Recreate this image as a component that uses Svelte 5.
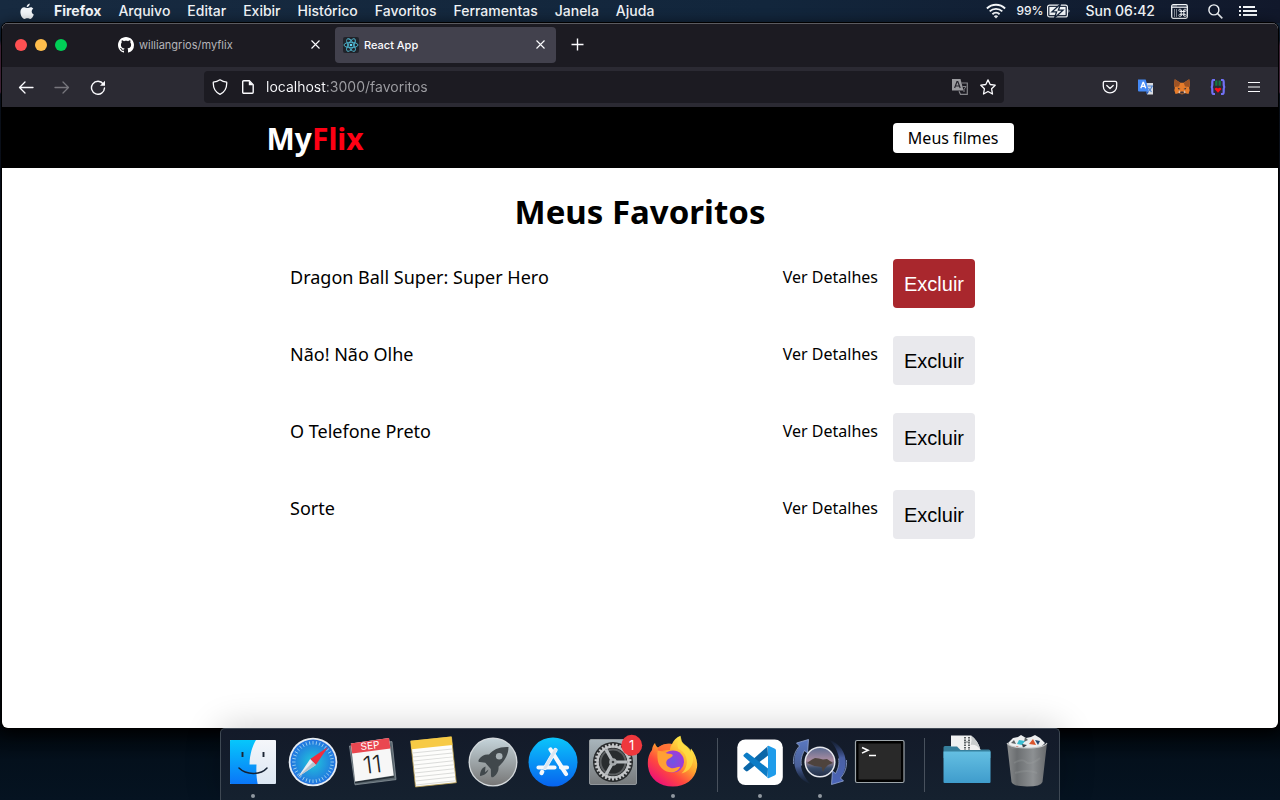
<script>
  const menus = ['Arquivo', 'Editar', 'Exibir', 'Histórico', 'Favoritos', 'Ferramentas', 'Janela', 'Ajuda'];
  const movies = ['Dragon Ball Super: Super Hero', 'Não! Não Olhe', 'O Telefone Preto', 'Sorte'];
  const ticks = Array.from({ length: 36 }, (_, i) => i * 10);
  const teeth = Array.from({ length: 30 }, (_, i) => i * 12);
</script>

<div class="desktop">
  <header class="menubar">
    <nav class="menus" aria-label="Menu">
      <button class="apple" aria-label="Apple">
        <svg width="14" height="17" viewBox="0 0 14 17" fill="currentColor">
          <path d="M9.8 0.6c.1 1.900-1.300 3.600-3.100 3.600C6.500 2.400 8.100.8 9.800.6z" />
          <path d="M13.300 5.800c-2.300 1.400-2 4.700.5 5.700-.6 1.900-2.100 4.400-3.500 4.400-1.200 0-1.500-.7-2.900-.7s-1.800.7-2.900.7C2.500 15.900.4 12.300.4 9c0-3 1.900-4.700 3.800-4.700 1.300 0 2.200.8 3.200.8.9 0 1.900-.9 3.400-.9 1 0 2 .6 2.500 1.600z" />
        </svg>
      </button>
      <button class="app-name">Firefox</button>
      {#each menus as m}
        <button>{m}</button>
      {/each}
    </nav>
    <div class="status">
      <svg width="20" height="16" viewBox="0 0 20 16" fill="none" stroke="currentColor" stroke-width="1.900">
        <path d="M.9 5.500a13 13 0 0 1 18.200 0M3.700 8.400a9 9 0 0 1 12.600 0M6.400 11.200a5.200 5.200 0 0 1 7.200 0" />
        <path d="M10 15.600l-2.200-2.300a3.200 3.200 0 0 1 4.400 0z" fill="currentColor" stroke="none" />
      </svg>
      <span class="percent">99%</span>
      <svg class="battery" width="24" height="14" viewBox="0 0 24 14">
        <rect x=".6" y="1.100" width="19.800" height="11.800" rx="2" fill="none" stroke="currentColor" stroke-width="1.200" />
        <rect x="2.400" y="2.900" width="16.200" height="8.200" fill="currentColor" />
        <path d="M21.600 4.800q1.600 2.200 0 4.400z" fill="currentColor" />
        <path d="M13.500 0L5 7.800h4.600L7.500 14 16 6.200h-4.600z" fill="currentColor" stroke="#13233a" stroke-width="1.300" />
      </svg>
      <span class="clock">Sun 06:42</span>
      <svg class="keys" width="17" height="15" viewBox="0 0 17 15" fill="none" stroke="currentColor">
        <rect x=".7" y=".7" width="15.600" height="13.600" rx="1.500" stroke-width="1.300" />
        <path d="M1 3.200h15" stroke-width="1.200" />
        <path d="M2.500 1.900h4" stroke-dasharray="1 1" />
        <path d="M3 6h3M3 8h3M3 10h3M3 12h3" stroke-dasharray="1 1" />
        <path d="M9 7.500h5M9 10.200h5M10.200 6v6M12.800 6v6" stroke-width="1" />
        <rect x="7.800" y="5.200" width="2.400" height="2.200" rx="1" stroke-width=".8" /><rect x="12.800" y="5.200" width="2.400" height="2.200" rx="1" stroke-width=".8" />
        <rect x="7.800" y="10.300" width="2.400" height="2.200" rx="1" stroke-width=".8" /><rect x="12.800" y="10.300" width="2.400" height="2.200" rx="1" stroke-width=".8" />
      </svg>
      <svg class="search" width="15" height="15" viewBox="0 0 15 15" fill="none" stroke="currentColor" stroke-width="1.400">
        <circle cx="5.900" cy="5.900" r="5" /><path d="M9.500 9.500l4.800 4.800" stroke-width="1.700" />
      </svg>
      <svg class="list" width="18" height="12" viewBox="0 0 18 12" fill="currentColor">
        <path d="M0 1h2v2H0zM0 5h2v2H0zM0 9h2v2H0zM4 1h12v2H4zM4 5h14v2H4zM4 9h14v2H4z" />
      </svg>
    </div>
  </header>

  <section class="window" aria-label="Firefox">
    <div class="tabbar">
      <div class="lights">
        <button class="red" aria-label="Fechar"></button>
        <button class="yellow" aria-label="Minimizar"></button>
        <button class="green" aria-label="Maximizar"></button>
      </div>
      <div class="tab">
        <svg width="16" height="16" viewBox="0 0 16 16" fill="#fff">
          <path d="M8 0C3.580 0 0 3.580 0 8c0 3.540 2.290 6.530 5.470 7.590.4.070.55-.17.55-.38 0-.19-.01-.82-.01-1.490-2.010.37-2.530-.49-2.690-.94-.09-.23-.48-.94-.82-1.130-.28-.15-.68-.52-.01-.53.63-.01 1.080.58 1.230.82.72 1.210 1.870.87 2.330.66.070-.52.28-.87.51-1.070-1.780-.2-3.640-.89-3.640-3.950 0-.87.31-1.590.82-2.150-.08-.2-.36-1.020.08-2.120 0 0 .67-.21 2.200.82.64-.18 1.320-.27 2-.27s1.360.09 2 .27c1.530-1.040 2.200-.82 2.200-.82.44 1.100.16 1.920.08 2.120.51.56.82 1.270.82 2.150 0 3.070-1.870 3.750-3.650 3.950.29.25.54.73.54 1.480 0 1.070-.01 1.930-.01 2.200 0 .21.15.46.55.38A8 8 0 0 0 16 8c0-4.420-3.580-8-8-8z" />
        </svg>
        <span>williangrios/myflix</span>
        <button class="close" aria-label="Fechar aba">
          <svg width="9" height="9" viewBox="0 0 9 9" stroke="currentColor" stroke-width="1.100"><path d="M.5.5l8 8M8.500.5l-8 8" /></svg>
        </button>
      </div>
      <div class="tab active">
        <svg width="16" height="16" viewBox="0 0 16 16" fill="none" stroke="#4fb9d3" stroke-width=".9">
          <rect width="16" height="16" rx="2" fill="#20232a" stroke="none" />
          <ellipse cx="8" cy="8" rx="7" ry="2.700" />
          <ellipse cx="8" cy="8" rx="7" ry="2.700" transform="rotate(60 8 8)" />
          <ellipse cx="8" cy="8" rx="7" ry="2.700" transform="rotate(120 8 8)" />
          <circle cx="8" cy="8" r="1.300" fill="#61dafb" stroke="none" />
        </svg>
        <span>React App</span>
        <button class="close" aria-label="Fechar aba">
          <svg width="9" height="9" viewBox="0 0 9 9" stroke="currentColor" stroke-width="1.100"><path d="M.5.5l8 8M8.500.5l-8 8" /></svg>
        </button>
      </div>
      <button class="plus" aria-label="Nova aba">
        <svg width="13" height="13" viewBox="0 0 13 13" stroke="currentColor" stroke-width="1.400"><path d="M6.500.5v12M.5 6.500h12" /></svg>
      </button>
    </div>

    <div class="toolbar">
      <div class="tools">
        <button aria-label="Voltar">
          <svg width="16" height="16" viewBox="0 0 16 16" fill="none" stroke="currentColor" stroke-width="1.300" stroke-linecap="round" stroke-linejoin="round"><path d="M15 8.500H1.500M7 3L1.500 8.500 7 14" /></svg>
        </button>
        <button class="dim" aria-label="Avançar">
          <svg width="16" height="16" viewBox="0 0 16 16" fill="none" stroke="currentColor" stroke-width="1.300" stroke-linecap="round" stroke-linejoin="round"><path d="M1 8.500h13.500M9 3l5.500 5.500L9 14" /></svg>
        </button>
        <button aria-label="Recarregar">
          <svg width="16" height="16" viewBox="0 0 16 16" fill="none" stroke="currentColor" stroke-width="1.400" stroke-linecap="round"><path d="M13.300 5a6.500 6.500 0 1 0 1.200 4" /><path d="M15 1.800v5h-5z" fill="currentColor" stroke="none" /></svg>
        </button>
      </div>
      <div class="urlbar">
        <svg width="16" height="16" viewBox="0 0 16 16" fill="none" stroke="#fbfbfe" stroke-width="1.300" stroke-linejoin="round"><path d="M8 .8c2 1.400 4.300 2.200 6.700 2.400.3 5.400-1.400 9.800-6.700 12.100C2.700 13 1 8.600 1.300 3.200 3.700 3 6 2.200 8 .8z" /></svg>
        <svg class="page" width="12" height="14" viewBox="0 0 12 14"><path d="M1.700.8h5.600l3.900 3.900v7.600a1 1 0 0 1-1 1H1.700a1 1 0 0 1-1-1V1.800a1 1 0 0 1 1-1z" fill="none" stroke="#fbfbfe" stroke-width="1.400" /><path d="M6.800.8v4.500h4.400z" fill="#fbfbfe" /></svg>
        <input class="address" type="text" aria-label="Endereço" value="localhost:3000/favoritos" />
        <svg width="16" height="16" viewBox="0 0 16 16"><path d="M0 0h8.500l3 11.500H0z" fill="#9b9b9f" /><path d="M2.600 9L5 2.500h.8L8.200 9M3.400 7h4" stroke="#25242c" stroke-width="1.200" fill="none" /><path d="M9.500 4h5.800v11.300H8.500l-1.500-3" fill="none" stroke="#85858a" stroke-width="1.200" /><path d="M10.500 7.500h3.500l-2 3M12 10.500v2.500" fill="none" stroke="#85858a" /></svg>
        <svg width="16" height="16" viewBox="0 0 16 16" fill="none" stroke="#fbfbfe" stroke-width="1.300" stroke-linejoin="round"><path d="M8 .9l2.200 4.600 5 .7-3.600 3.600.9 5.200L8 12.500 3.500 15l.9-5.200L.8 6.200l5-.7z" /></svg>
      </div>
      <div class="tools">
        <button aria-label="Pocket">
          <svg width="16" height="16" viewBox="0 0 16 16" fill="none" stroke="currentColor" stroke-width="1.300" stroke-linecap="round" stroke-linejoin="round"><path d="M2.800 2.300h10.400a1.500 1.500 0 0 1 1.500 1.500v3.400a6.700 6.700 0 0 1-13.400 0V3.800a1.500 1.500 0 0 1 1.500-1.500z" /><path d="M4.800 6.500L8 9.500l3.200-3" /></svg>
        </button>
        <button aria-label="Traduzir">
          <svg width="16" height="16" viewBox="0 0 16 16"><path d="M7 4h8v11.500H9z" fill="#d9dbe0" /><path d="M9.800 7h4.600l-3 5M10.500 9l3 4" stroke="#4d82cf" stroke-width="1.100" fill="none" /><path d="M0 .5h7.700l3.300 12H1a1 1 0 0 1-1-1z" fill="#4489f5" /><path d="M2.800 9.200L5 3.500h.5L7.700 9.200M3.600 7.300h3.500" stroke="#fff" stroke-width="1.300" fill="none" /><path d="M7.800 12.500H11l-2 3z" fill="#2459b8" /></svg>
        </button>
        <button aria-label="MetaMask">
          <svg width="16" height="16" viewBox="0 0 16 16"><path d="M.8.3l5.500 3.500h3.400L15.200.3 16 5l-.8 4 .5 2.300-1.200 3.700-4-1-1.400 1.200H6.900L5.500 14l-4 1L.3 11.300.8 9 0 5z" fill="#e77c2b" /><path d="M.8.3l5.500 3.500L5 7.500.8 8 0 5zM15.200.3L9.700 3.800 11 7.500l4.200.5.8-3z" fill="#9d5325" /><path d="M3.500 8.500L6.500 10l-2 .5zM12.500 8.500L9.500 10l2 .5z" fill="#31323c" /><path d="M6.500 12.500h3l.5 2H6z" fill="#38313a" /><path d="M5.300 11.200l1 1.300-.5 2-1.500-1zM10.700 11.200l-1 1.300.5 2 1.500-1z" fill="#d8bfb0" /></svg>
        </button>
        <button aria-label="JSON">
          <svg width="16" height="16" viewBox="0 0 16 16"><path d="M5 1H3.500q-1.200 0-1.200 2v2.500Q2.300 8 .8 8q1.500 0 1.500 2.500V13q0 2 1.200 2H5M11 1h1.500q1.200 0 1.200 2v2.500q0 2.500 1.500 2.500-1.500 0-1.500 2.500V13q0 2-1.200 2H11" fill="none" stroke="#7071f5" stroke-width="2.200" /><path d="M6.300 1.500v5.300M9.700 1.500v5.300" stroke="#167840" stroke-width="2.300" /><path d="M4.500 10q1.500-2 3.500-.5 2-1.500 3.500.5L8 13.800z" fill="#ff1018" /></svg>
        </button>
        <button aria-label="Abrir menu">
          <svg width="12" height="12" viewBox="0 0 12 12" stroke="currentColor" stroke-width="1.200"><path d="M0 1.500h12M0 6h12M0 10.500h12" /></svg>
        </button>
      </div>
    </div>

    <div class="site">
      <header class="site-header">
        <div class="site-inner">
          <a class="logo" href="#inicio">My<span>Flix</span></a>
          <a class="mine" href="#favoritos">Meus filmes</a>
        </div>
      </header>
      <main>
        <h1>Meus Favoritos</h1>
        <ul>
          {#each movies as movie, i}
            <li>
              <span class="title">{movie}</span>
              <a href="#detalhes">Ver Detalhes</a>
              <button class:hot={i === 0}>Excluir</button>
            </li>
          {/each}
        </ul>
      </main>
    </div>
  </section>

  <footer class="dock-row">
    <nav class="dock" aria-label="Dock">
      <button aria-label="Finder">
        <svg viewBox="0 0 60 72">
          <defs>
            <linearGradient id="fd" x2="0" y2="1"><stop stop-color="#06c7fb" /><stop offset="1" stop-color="#0a76f8" /></linearGradient>
            <linearGradient id="fl" x2="0" y2="1"><stop stop-color="#f5f6fa" /><stop offset="1" stop-color="#dce7f3" /></linearGradient>
          </defs>
          <rect x="7" y="12" width="46" height="44" rx="1" fill="url(#fl)" />
          <path d="M8 12h25c-3.500 6-6.200 14-6.500 24.500h7c-.4 7 0 13.500 1.200 19.500H8a1 1 0 0 1-1-1V13a1 1 0 0 1 1-1z" fill="url(#fd)" />
          <path d="M19.500 24v5M40.500 24v5" stroke="#1b2533" stroke-width="1.900" />
          <path d="M16 40c7 7 21.500 7.500 28 0" stroke="#152133" stroke-width="1.500" fill="none" stroke-linecap="round" />
          <circle cx="30" cy="68" r="2" fill="#8f979f" />
        </svg>
      </button>
      <button aria-label="Safari">
        <svg viewBox="0 0 60 72">
          <defs><radialGradient id="sf"><stop stop-color="#21c8dc" /><stop offset="1" stop-color="#2272df" /></radialGradient></defs>
          <circle cx="30" cy="34" r="24.300" fill="#e8edf2" /><circle cx="30" cy="34" r="22.500" fill="url(#sf)" />
          {#each ticks as a}<path d="M30 13v3.500" stroke="#a9d8f2" stroke-width=".8" transform="rotate({a} 30 34)" />{/each}
          <path d="M45 19L32.800 37 27.200 31z" fill="#f02d3d" /><path d="M15 49l12.200-18 5.600 6z" fill="#e9edf2" /><path d="M15 49l15-15 2.800 3z" fill="#b9c3cd" />
        </svg>
      </button>
      <button aria-label="Calendário">
        <svg viewBox="0 0 60 72">
          <path d="M6.500 18L12 56.800l41-5.200-4-38z" fill="#59656d" stroke="#98a2a8" stroke-width=".7" />
          <path d="M12 54.500l39-5.800" stroke="#242d35" stroke-width="1.500" />
          <path d="M7.800 15.500L46 10l4.700 37.500-38.500 6z" fill="#f7f7f7" /><path d="M7.800 15.500L46 10l1.400 10.600-38.200 5z" fill="#e94750" />
          <g transform="rotate(-7 29 34)" text-anchor="middle">
            <text x="29" y="21" fill="#fff" font-size="10">SEP</text>
            <text x="29" y="45" fill="#252525" font-size="24" font-weight="300">11</text>
          </g>
        </svg>
      </button>
      <button aria-label="Notas">
        <svg viewBox="0 0 60 72">
          <g transform="rotate(-6 30 34)">
            <rect x="10" y="11" width="41" height="46" fill="#fdfdfb" stroke="#b69a4c" stroke-width=".8" /><rect x="10" y="10.500" width="41" height="8.500" fill="#f7ca45" />
            <path d="M10.500 23h40M10.500 27h40M10.500 31h40M10.500 35h40M10.500 39h40M10.500 43h40M10.500 47h40M10.500 51h40M10.500 55h40" stroke="#dbdcda" />
          </g>
        </svg>
      </button>
      <button aria-label="Launchpad">
        <svg viewBox="0 0 60 72">
          <defs><linearGradient id="lp" x2="0" y2="1"><stop stop-color="#c4d3d9" /><stop offset="1" stop-color="#777" /></linearGradient></defs>
          <circle cx="30" cy="34" r="24.500" fill="#d4d9dc" /><circle cx="30" cy="34" r="23.200" fill="url(#lp)" />
          <path d="M45.500 19c-9-.5-15.500 2.500-19.500 7.500-4-.5-7.500 1-10 4.800-.9 1.600-.8 2.500.8 2.700l5.500.8 5.500 6.200.2 6.500c.1 2 1.200 2.300 2.800 1.200 3.300-2.500 5.200-6 4.700-10C40 34.500 45.500 28 45.500 19z" fill="#41484c" />
          <circle cx="36.200" cy="28.300" r="3.300" fill="#a8b1b5" /><path d="M22.500 38.500c-4 1.500-5.500 5.500-5.500 9.500 4-.5 7.500-3 8.500-6.500l-3.500 2.800z" fill="#41484c" />
        </svg>
      </button>
      <button aria-label="App Store">
        <svg viewBox="0 0 60 72">
          <defs><linearGradient id="as" x2="0" y2="1"><stop stop-color="#0bc5fb" /><stop offset="1" stop-color="#0763ef" /></linearGradient></defs>
          <circle cx="30" cy="34" r="24.500" fill="url(#as)" />
          <g stroke="#f5f8fc" stroke-width="4.200" stroke-linecap="round"><path d="M32.500 22L22 40M18.600 45l.6-1.200M27.500 21.500L43 46" /><path d="M15.500 39.500h16M38 39.500h6" /></g>
          <path d="M32.500 22L22 40" stroke="#dbe5f0" stroke-width="3" stroke-linecap="round" />
        </svg>
      </button>
      <button aria-label="Preferências, 1 aviso">
        <svg viewBox="0 0 60 72">
          <defs><linearGradient id="st" x2="0" y2="1"><stop stop-color="#a8b5bc" /><stop offset="1" stop-color="#777a7c" /></linearGradient></defs>
          <rect x="6.500" y="11.500" width="47" height="45" rx="1.500" fill="url(#st)" stroke="#a5aaad" stroke-width=".8" />
          <circle cx="30" cy="34" r="20" fill="#292c2e" />
          <circle cx="30" cy="34" r="15.500" fill="none" stroke="#b9bcbe" stroke-width="2.500" />
          {#each teeth as a}<path d="M30 15.500v4" stroke="#c6c8ca" stroke-width="1.900" transform="rotate({a} 30 34)" />{/each}
          <circle cx="30" cy="34" r="12.500" fill="none" stroke="#5b5e60" stroke-width="2" />
          <path d="M30 34h14M30 34l-7-12.500M30 34l-7 12.500" stroke="#b6babd" stroke-width="3.200" /><circle cx="30" cy="34" r="3.800" fill="#a6aaac" /><circle cx="30" cy="34" r="1.300" fill="#3b3e40" />
          <circle cx="48.700" cy="17.300" r="10.500" fill="#ef383d" /><text x="48.700" y="22" text-anchor="middle" fill="#fff" font-size="13">1</text>
        </svg>
      </button>
      <button aria-label="Firefox">
        <svg viewBox="0 0 60 72">
          <defs>
            <linearGradient id="fx" x1=".8" y1=".1" x2=".2" y2=".9"><stop stop-color="#fff04b" /><stop offset=".4" stop-color="#ffa52d" /><stop offset=".7" stop-color="#ff493e" /><stop offset="1" stop-color="#ee1671" /></linearGradient>
            <radialGradient id="fp"><stop stop-color="#6e55e4" /><stop offset="1" stop-color="#a13bd7" /></radialGradient>
          </defs>
          <path d="M9 22c.2-3 1.500-5.500 3-7 .5 2 1.500 3.500 3 4.500 4-3.500 9-4.500 14-3.500 1.500-3.500 4-6.500 8.500-8.200-.3 5 2 7.500 5.500 10.200 2 1.500 3.500 3.500 4.500 6l.5-3.500c4.500 5.500 7 13 6 19-2 12.500-12 19-24 19C16.500 58.500 6.500 51 5 38.500c-.7-7 .5-12 4-16.500z" fill="url(#fx)" />
          <path d="M15 19.500c4-3.500 9-4.500 14-3.500-1.500 2-2 4-2 6-5 0-9 1-12.500 3z" fill="#ff5a3a" opacity=".7" />
          <circle cx="30" cy="33.500" r="11" fill="url(#fp)" />
          <path d="M14.500 22.500c4 .5 7 1.500 9.500 3 3 .3 5.700.7 5.800 1.800-.5 2.200-4.500 3.200-6 5.200-1.500 3 0 6.500 4 7.500 4 1 6-1.500 9.500-1.200-2 4.200-6 5.700-9 5.500-7-.3-12.500-5-13.500-12-.5-3.500-.5-6.500-.3-9.800z" fill="#ffa034" />
          <path d="M37.500 8c-3 5-4 9.500-2 13 4 1.500 8 5.500 8.300 12 .2 6-2.800 10-5.300 12.500 8-2 13.500-9.500 11-19-1.500-7.500-8-9-10.500-13z" fill="#ffdf43" opacity=".75" />
          <circle cx="30" cy="68" r="2" fill="#8f979f" />
        </svg>
      </button>
      <span class="divider"></span>
      <button aria-label="Visual Studio Code">
        <svg viewBox="0 0 60 72">
          <rect x="7.300" y="11.500" width="45.500" height="45.500" rx="8" fill="#fff" />
          <path d="M37.500 18.500L13.800 39.500q-.8 1 0 1.800l2 1.800q1 .8 2 0L38 27.500z" fill="#0b66a8" />
          <path d="M37.500 49.500L13.800 28.500q-.8-1 0-1.800l2-1.800q1-.8 2 0L38 40.500z" fill="#0c7cc6" />
          <path d="M37 18.500q1-1 2-.5l6 2.800q1 .5 1 1.700v23q0 1.200-1 1.700l-6 2.800q-1 .5-2-.5 1 0 1-1.500V20q0-1.500-1-1.500z" fill="#1f9cea" />
          <circle cx="30" cy="68" r="2" fill="#8f979f" />
        </svg>
      </button>
      <button aria-label="Sincronizar">
        <svg viewBox="0 0 60 72">
          <defs><linearGradient id="sk" x2="0" y2="1"><stop stop-color="#596b91" /><stop offset=".45" stop-color="#ab8da1" /><stop offset=".7" stop-color="#394c69" /><stop offset="1" stop-color="#222c45" /></linearGradient>
            <linearGradient id="ar" x2="0" y2="1"><stop stop-color="#5a78c0" /><stop offset=".6" stop-color="#4a6099" /><stop offset="1" stop-color="#263a67" stop-opacity=".1" /></linearGradient>
            <linearGradient id="br" x2="0" y2="1"><stop stop-color="#263a67" stop-opacity=".1" /><stop offset=".4" stop-color="#4a60a4" /><stop offset="1" stop-color="#4a64b8" /></linearGradient></defs>
          <path d="M6.500 15L18.500 11.500 17.500 25l-3-2.500c-6 9-5 22 6 33.500C5 51 -1 32 9.500 18z" fill="url(#ar)" /><path d="M3.500 36C3 29 5 23 9.500 18l-3-3 12-3.500-1 13.500-3-2.500c-3 5-4 10-3 15" fill="none" stroke="#93a6d3" stroke-width=".8" />
          <path d="M53.500 53L41.500 56.500 42.500 43l3 2.500c6-9 5-22-6-33.500C55 17 61 36 50.500 50z" fill="url(#br)" /><path d="M56.500 32c.5 7-1.500 13-6 18l3 3-12 3.500 1-13.500 3 2.500c3-5 4-10 3-15" fill="none" stroke="#93a6d3" stroke-width=".8" />
          <circle cx="30" cy="34" r="14.800" fill="url(#sk)" stroke="#e6e8ee" stroke-width="1.500" />
          <path d="M17 35l5-3.500 3-1.500 4 .5 4 1 4-.5 6 4-5 2-3 3-2 4-1.500-5-7-1z" fill="#4e433d" />
          <circle cx="30" cy="68" r="2" fill="#8f979f" />
        </svg>
      </button>
      <button aria-label="Terminal">
        <svg viewBox="0 0 60 72">
          <rect x="5.500" y="12.500" width="48.500" height="42" rx="1.500" fill="#000" stroke="#9da5aa" stroke-width="1.200" /><rect x="8.500" y="15.500" width="42.500" height="36" fill="#292929" />
          <path d="M12 19.500l6 2.800-6 2.800M19 27.500h7" fill="none" stroke="#fff" stroke-width="1.600" />
        </svg>
      </button>
      <span class="divider"></span>
      <button aria-label="Downloads">
        <svg viewBox="0 0 60 72">
          <defs><linearGradient id="fo" x2="0" y2="1"><stop stop-color="#64bfe2" /><stop offset="1" stop-color="#3f9ccc" /></linearGradient></defs>
          <path d="M6.500 19.500q0-1.500 1.500-1.500h12l3.500 3.500h28q2 0 2 2V30h-47z" fill="#367f9c" />
          <path d="M14 7.500h20q7 5 9.500 14.500h-20L20 18.500h-6z" fill="#f0f1f1" /><path d="M28 9v13M32 9v13" stroke="#555b5e" stroke-width="1.900" stroke-dasharray="1.500 1" /><path d="M27 14h6" stroke="#6d7275" /><path d="M34 7.500q1.500 5-.3 9.500 6-1 9.800 5-2.500-10-9.500-14.500z" fill="#c8cccd" />
          <path d="M6.500 23.500h47V54a1 1 0 0 1-1 1h-45a1 1 0 0 1-1-1z" fill="url(#fo)" />
        </svg>
      </button>
      <button aria-label="Lixo">
        <svg viewBox="0 0 60 72">
          <defs><linearGradient id="tr"><stop stop-color="#8f9192" /><stop offset=".25" stop-color="#6f7274" /><stop offset=".65" stop-color="#929597" /><stop offset="1" stop-color="#6a6c6e" /></linearGradient></defs>
          <path d="M11 15l5-5 5-1 3-2 5 3 5-1 4-2 5 3 5 5-5 5-28 1z" fill="#eceeef" />
          <path d="M14 15l3-3 2 4zM28 9l3 3-4 2z" fill="#5d6366" /><path d="M22 12l6 1-3 4-5-1z" fill="#38bcd0" /><path d="M32 16l4-5 3 6z" fill="#d9542d" /><path d="M38 12l5 1-2 4z" fill="#22456e" /><path d="M25 16l5 1-4 3z" fill="#3a424b" /><path d="M19 18l3 1-2 1z" fill="#b63d29" />
          <path d="M10 15q3 5 20 5t20-5l-4.500 39q-1.500 4.500-15.500 4.500T14.500 54z" fill="url(#tr)" opacity=".96" />
          <path d="M10 15q3 5 20 5t20-5" fill="none" stroke="#c7c9ca" stroke-width="1.200" /><path d="M17 35q8-5 12-1t14-4M18 45q12-4 22 0" stroke="#a0a3a4" stroke-width="2" opacity=".25" fill="none" />
        </svg>
      </button>
    </nav>
  </footer>
</div>

<style>
  :global(body) { margin: 0; background: #050f1b; }
  * { box-sizing: border-box; }
  button { border: 0; padding: 0; background: none; color: inherit; font: inherit; }
  svg { display: block; flex: none; }
  a { color: inherit; text-decoration: none; }

  .desktop {
    min-height: 100vh;
    display: flex;
    flex-direction: column;
    font-family: Inter, sans-serif;
    background: linear-gradient(#14263c 0 40px, #6b3a5c 46px 92px, #111a2c 94px, #0a1220 500px, #01060b 728px, #04101c 760px, #051321);
  }
  .menubar {
    height: 23px;
    padding: 0 23px 1px 20px;
    display: flex;
    align-items: center;
    justify-content: space-between;
    background: linear-gradient(90deg, #172a40, #12263c 60%, #11182b);
    color: #f3f6f9;
    font-size: 14px;
    font-weight: 500;
  }
  .menus { display: flex; gap: 17px; align-items: center; line-height: 20px; }
  .apple { width: 17px; }
  .app-name { font-weight: 700; }
  .status { display: flex; align-items: center; line-height: 20px; }
  .percent { font-size: 12px; margin: 0 4px 0 10px; }
  .clock { margin: 0 16px 0 14px; }
  .search { margin: 0 16px 0 20px; }

  .window {
    flex: 1;
    margin: 0 2px;
    display: flex;
    flex-direction: column;
    border-radius: 6px;
    overflow: hidden;
    background: #fff;
    box-shadow: 0 0 0 1px #000, 0 4px 16px #000;
  }
  .tabbar {
    height: 44px;
    display: flex;
    align-items: center;
    padding: 0 0 2px 13px;
    background: #1c1b22;
    border-top: 1px solid #5b5b60;
    color: #fbfbfe;
  }
  .lights { display: flex; gap: 8px; margin-right: 43px; }
  .lights button { width: 12px; height: 12px; border-radius: 50%; }
  .red { background: #ff5052; }
  .yellow { background: #ffbd4c; }
  .green { background: #00ce56; }
  .tab {
    width: 221px;
    height: 36px;
    margin-right: 4px;
    padding: 0 11px 0 8px;
    display: flex;
    align-items: center;
    gap: 5px;
    border-radius: 4px;
    font-size: 11px;
    color: #b5b5b9;
  }
  .tab.active { background: #42414d; color: #fbfbfe; font-weight: 500; }
  .close { margin-left: auto; color: #fbfbfe; }
  .plus { margin-left: 11px; }
  .toolbar {
    height: 41px;
    padding: 0 6px;
    display: flex;
    align-items: center;
    justify-content: space-between;
    background: #2b2a33;
    border-bottom: 1px solid #000;
    color: #fbfbfe;
  }
  .tools { display: flex; }
  .tools button { width: 36px; height: 32px; display: grid; place-items: center; }
  .dim { color: #77767d; }
  .urlbar {
    flex: 0 1 800px;
    height: 32px;
    padding: 0 8px;
    display: flex;
    align-items: center;
    gap: 12px;
    background: #1c1b22;
    border-radius: 4px;
  }
  .page { margin: 0 0 0 2px; }
  .address {
    flex: 1;
    min-width: 0;
    padding: 0;
    border: 0;
    outline: 0;
    font: 14px/20px Inter, sans-serif;
    color: transparent;
    background: linear-gradient(90deg, #fbfbfe 60px, #9f9fa4 60px) text;
  }

  .site { flex: 1; font-family: "Noto Sans", sans-serif; color: #000; }
  .site-header { background: #000; }
  .site-inner {
    max-width: 747px;
    height: 60px;
    margin: 0 auto;
    display: flex;
    align-items: center;
    justify-content: space-between;
  }
  .logo { color: #fff; font-size: 30px; font-weight: 700; }
  .logo span { color: #ff0014; }
  .mine { padding: 0 15px; line-height: 30px; border-radius: 4px; background: #fff; font-size: 16px; }
  main { max-width: 700px; margin: 0 auto; padding-top: 24px; }
  h1 { margin: 0 0 27px; text-align: center; font-size: 33px; line-height: 40px; }
  ul { list-style: none; margin: 0; padding: 0; display: grid; gap: 28px; }
  li { display: flex; align-items: flex-start; gap: 15px; padding-right: 15px; }
  li .title { flex: 1; font-size: 18px; line-height: 37px; }
  li a { font-size: 16px; line-height: 36px; }
  li button {
    width: 82px;
    height: 49px;
    padding-top: 2px;
    border-radius: 4px;
    background: #e9e9ed;
    font: 20px "Liberation Sans", Arial, sans-serif;
  }
  li .hot { background: #a9272d; color: #fff; }

  .dock-row { display: flex; justify-content: center; height: 72px; }
  .dock {
    position: relative;
    display: flex;
    padding: 0 2px;
    background: linear-gradient(#131a29, #15212f);
    border: 1px solid #3e4853;
    border-bottom: 0;
    border-radius: 5px 5px 0 0;
    box-shadow: 0 0 36px rgba(0, 0, 0, .2);
  }
  .dock button { width: 60px; height: 72px; margin-top: -1px; }
  .dock svg { width: 60px; height: 72px; font-family: Inter, sans-serif; }
  .divider { width: 1px; height: 54px; margin: 9px 12px 0 14px; background: #48515d; }
</style>
